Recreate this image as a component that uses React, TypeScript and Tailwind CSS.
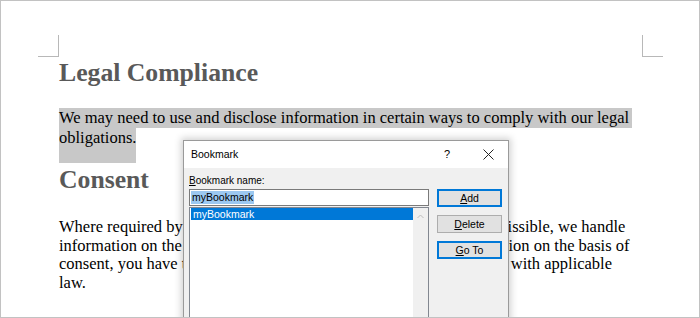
import React from 'react';

const ui = "font-['Segoe_UI','Liberation_Sans',Arial,sans-serif]";

const DialogButton: React.FC<{ hot: string; rest: string; primary?: boolean }> = ({ hot, rest, primary }) => (
  <div
    className={
      'flex h-[18px] w-[65px] items-center justify-center bg-[#e1e1e1] text-[10.5px] leading-none text-black ' +
      (primary ? 'border-2 border-[#0078d7]' : 'border border-[#adadad]')
    }
  >
    <span>
      <u>{hot}</u>
      {rest}
    </span>
  </div>
);

const BookmarkDialog: React.FC = () => (
  <div className={`absolute left-[182px] top-[139px] h-[200px] w-[326px] border border-[#9a9a9a] bg-[#f0f0f0] shadow-[0_0_7px_2px_rgba(0,0,0,0.18)] ${ui}`}>
    {/* title bar */}
    <div className="flex h-[27px] items-center bg-white pl-[7px] text-[10.5px] text-black">
      <span>Bookmark</span>
      <span className="ml-auto mr-[33px] text-[11px]">?</span>
      <svg width="11" height="11" viewBox="0 0 11 11" className="mr-[14px]">
        <path d="M0.5 0.5 L10.5 10.5 M10.5 0.5 L0.5 10.5" stroke="#222" strokeWidth="1" />
      </svg>
    </div>

    <div className="flex gap-[8px] pl-[5px] pt-[5px]">
      <div className="w-[240px]">
        <div className="mb-[1px] h-[15px] text-[10px] leading-[15px] text-black">
          <u>B</u>ookmark name:
        </div>
        <div className="flex h-[17px] items-center border border-[#7a7a7a] bg-white px-[1px]">
          <span className="bg-[#9cc8f0] px-[1px] text-[10.5px] leading-[13px] text-black">myBookmark</span>
        </div>
        <div className="mt-[1px] flex h-[130px] border border-[#828790] bg-white">
          <div className="flex-1 pl-[1px]">
            <div className="h-[12px] bg-[#0078d7] pl-[2px] text-[10.5px] leading-[12px] text-white">myBookmark</div>
          </div>
          <div className="flex w-[15px] justify-center bg-[#f0f0f0] pt-[6px]">
            <svg width="7" height="5" viewBox="0 0 7 5">
              <path d="M0.5 4 L3.5 1 L6.5 4" fill="none" stroke="#bdbdbd" strokeWidth="1" />
            </svg>
          </div>
        </div>
      </div>

      <div className="flex flex-col gap-[8px] pt-[16px]">
        <DialogButton hot="A" rest="dd" primary />
        <DialogButton hot="D" rest="elete" />
        <DialogButton hot="G" rest="o To" primary />
      </div>
    </div>
  </div>
);

export default function App() {
  return (
    <div className="relative h-[318px] w-[700px] overflow-hidden border border-[#c2c2c2] bg-white">
      {/* page corner marks */}
      <div className="absolute left-[37px] top-[34px] h-[22px] w-[21px] border-b border-r border-[#b8b8b8]" />
      <div className="absolute left-[641px] top-[34px] h-[22px] w-[21px] border-b border-l border-[#b8b8b8]" />

      <div className="pl-[58px] pt-[57px] font-['Liberation_Serif','Times_New_Roman',serif] text-black">
        <h1 className="h-[30px] text-[25.7px] font-bold leading-[30px] text-[#595959]">Legal Compliance</h1>

        <div className="mt-[20px] text-[16.5px] leading-[20px]">
          <div>
            <span className="inline-block h-[20px] whitespace-nowrap bg-[#c8c8c8] pr-[3px]">
              We may need to use and disclose information in certain ways to comply with our legal
            </span>
          </div>
          <div>
            <span className="inline-block h-[35px] bg-[#c8c8c8]">obligations.</span>
          </div>
        </div>

        <h2 className="mt-[2px] h-[30px] text-[25.7px] font-bold leading-[30px] text-[#595959]">Consent</h2>

        <p className="mt-[23px] whitespace-nowrap text-[16.5px] leading-[18.7px]">
          Where required by law, we will seek your consent. Where it is permissible, we handle
          <br />
          information on the basis of legitimate interests. If we share information on the basis of
          <br />
          consent, you have the right to withdraw it at any time in accordance with applicable
          <br />
          law.
        </p>
      </div>

      <BookmarkDialog />
    </div>
  );
}
